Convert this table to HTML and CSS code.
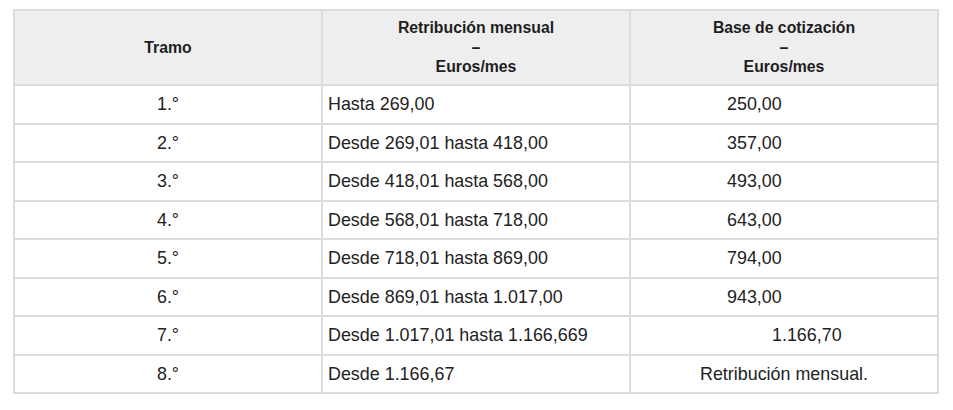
FILE: index.html
```html
<!DOCTYPE html>
<html lang="es">
<head>
<meta charset="utf-8">
<title>Tramos</title>
<link rel="stylesheet" href="styles.css">
</head>
<body>
<table class="tabla">
  <colgroup><col class="c"><col class="c"><col class="c"></colgroup>
  <thead>
    <tr>
      <th>Tramo</th>
      <th>Retribución mensual<br>–<br>Euros/mes</th>
      <th>Base de cotización<br>–<br>Euros/mes</th>
    </tr>
  </thead>
  <tbody>
    <tr><td class="center">1.°</td><td>Hasta 269,00</td><td class="num">250,00</td></tr>
    <tr><td class="center">2.°</td><td>Desde 269,01 hasta 418,00</td><td class="num">357,00</td></tr>
    <tr><td class="center">3.°</td><td>Desde 418,01 hasta 568,00</td><td class="num">493,00</td></tr>
    <tr><td class="center">4.°</td><td>Desde 568,01 hasta 718,00</td><td class="num">643,00</td></tr>
    <tr><td class="center">5.°</td><td>Desde 718,01 hasta 869,00</td><td class="num">794,00</td></tr>
    <tr><td class="center">6.°</td><td>Desde 869,01 hasta 1.017,00</td><td class="num">943,00</td></tr>
    <tr><td class="center">7.°</td><td>Desde 1.017,01 hasta 1.166,669</td><td class="num wide">1.166,70</td></tr>
    <tr><td class="center">8.°</td><td>Desde 1.166,67</td><td class="center">Retribución mensual.</td></tr>
  </tbody>
</table>
</body>
</html>
```

FILE: styles.css
```css
html, body {
  margin: 0;
  padding: 0;
  background: #ffffff;
}

body {
  padding: 9px 0 0 13px;
  font-family: "Liberation Sans", Arial, sans-serif;
  color: #222222;
}

.tabla {
  border-collapse: collapse;
  table-layout: fixed;
  width: 926px;
  border: 2px solid #dcdcdc;
}

.tabla .c {
  width: 308px;
}

.tabla th,
.tabla td {
  border: 2px solid #dcdcdc;
  padding: 0 5px;
  vertical-align: middle;
}

.tabla th {
  background: #eeeeee;
  font-size: 15.8px;
  font-weight: bold;
  line-height: 19.5px;
  height: 73px;
  text-align: center;
  color: #1e1e1e;
}

.tabla td {
  font-size: 17.9px;
  height: 36.5px;
  line-height: 20px;
  text-align: left;
  white-space: nowrap;
}

.tabla td.center {
  text-align: center;
}

.tabla td.num {
  padding-left: 96px;
}

.tabla td.num.wide {
  padding-left: 141px;
}
```
